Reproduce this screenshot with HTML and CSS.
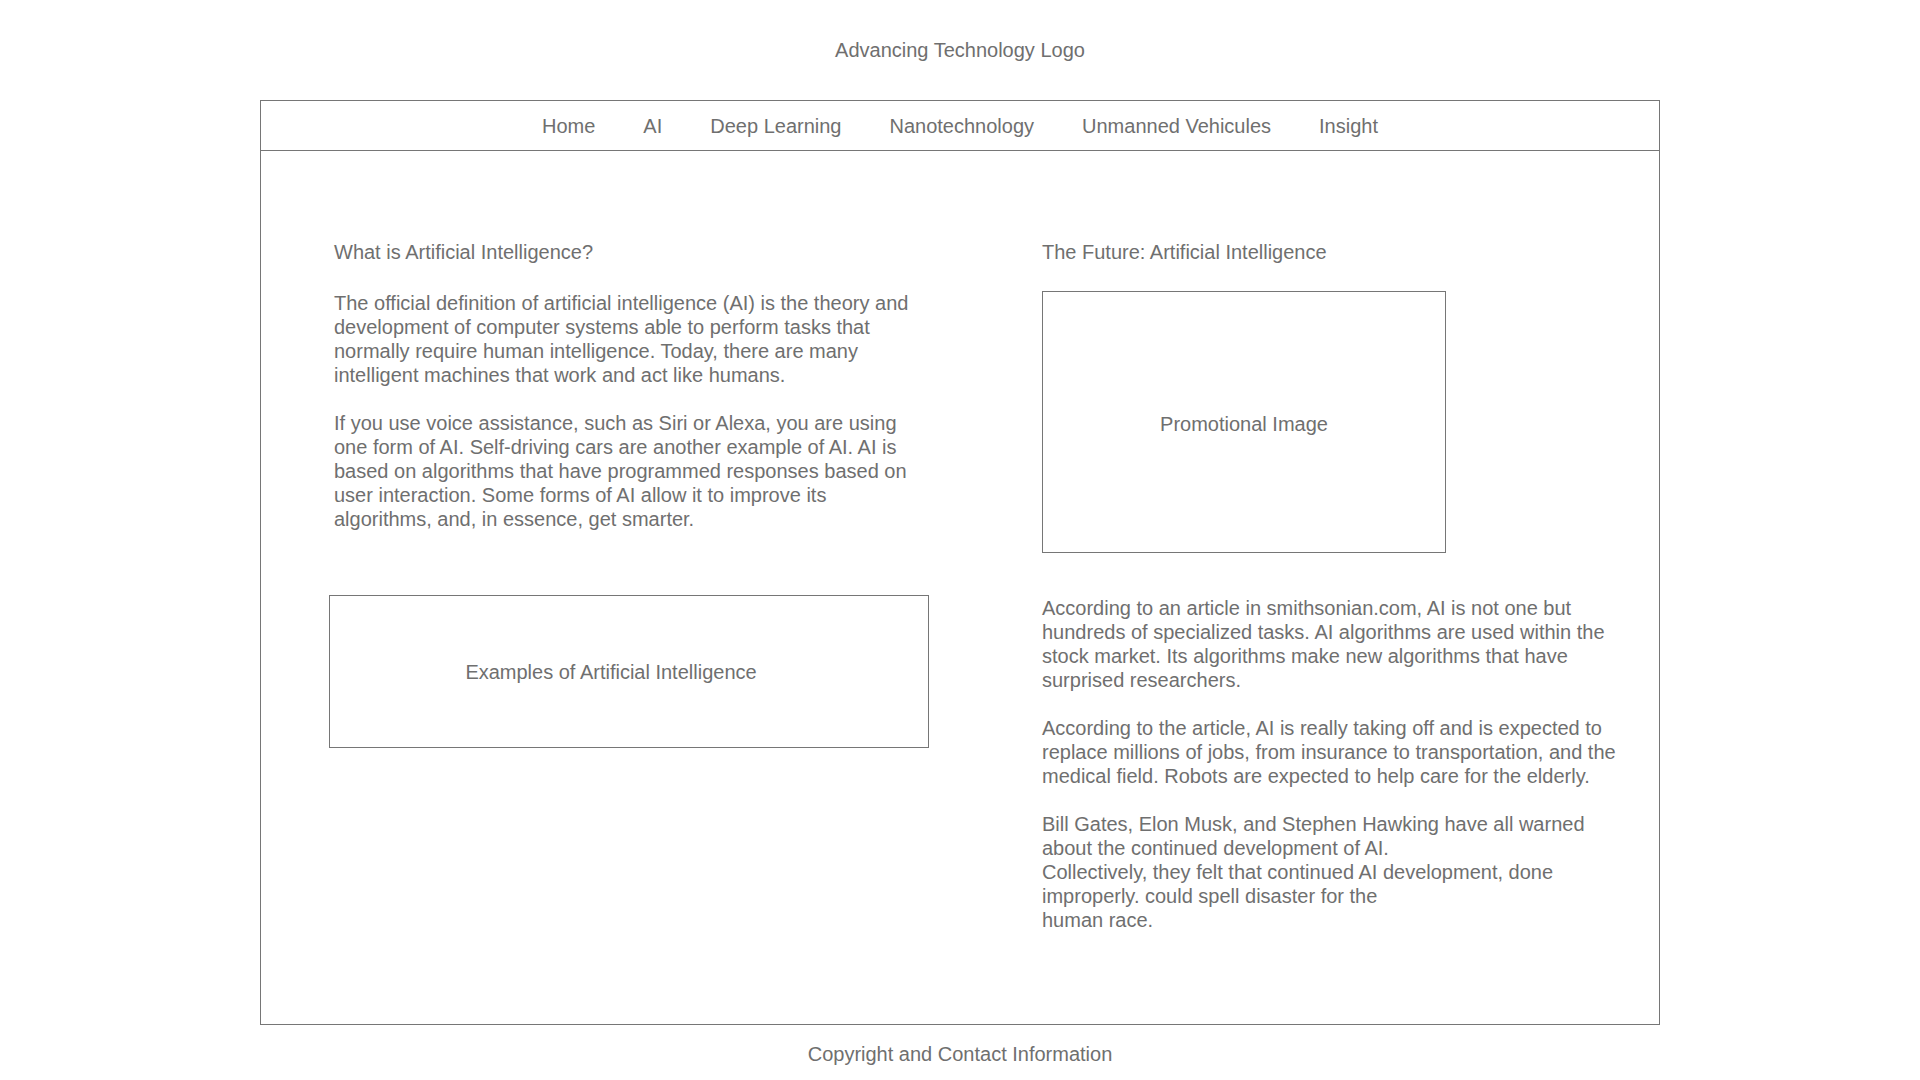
FILE: index.html
```html
<!DOCTYPE html>
<html lang="en">
<head>
  <meta charset="UTF-8" />
  <meta name="viewport" content="width=device-width, initial-scale=1.0" />
  <title>Advancing Technology | AI</title>
  <link rel="stylesheet" href="styles.css">
</head>
<body>
  <header class="logo">Advancing Technology Logo</header>

  <div class="frame">
    <nav class="menu">
      <a href="#">Home</a>
      <a href="#">AI</a>
      <a href="#">Deep Learning</a>
      <a href="#">Nanotechnology</a>
      <a href="#">Unmanned Vehicules</a>
      <a href="#">Insight</a>
    </nav>

    <main class="content">
      <section class="col">
        <h2>What is Artificial Intelligence?</h2>
        <p>The official definition of artificial intelligence (AI) is the theory and development of computer systems able to perform tasks that normally require human intelligence. Today, there are many intelligent machines that work and act like humans.</p>
        <p>If you use voice assistance, such as Siri or Alexa, you are using one form of AI. Self-driving cars are another example of AI. AI is based on algorithms that have programmed responses based on user interaction. Some forms of AI allow it to improve its algorithms, and, in essence, get smarter.</p>
        <div class="placeholder examples">Examples of Artificial Intelligence</div>
      </section>

      <section class="col">
        <h2>The Future: Artificial Intelligence</h2>
        <div class="placeholder promo">Promotional Image</div>
        <p class="first">According to an article in smithsonian.com, AI is not one but hundreds of specialized tasks. AI algorithms are used within the stock market. Its algorithms make new algorithms that have surprised researchers.</p>
        <p>According to the article, AI is really taking off and is expected to replace millions of jobs, from insurance to transportation, and the medical field. Robots are expected to help care for the elderly.</p>
        <p>Bill Gates, Elon Musk, and Stephen Hawking have all warned about the continued development of AI.<br>
        Collectively, they felt that continued AI development, done improperly. could spell disaster for the<br>
        human race.</p>
      </section>
    </main>
  </div>

  <footer>Copyright and Contact Information</footer>
</body>
</html>
```

FILE: styles.css
```css
body {
  font-family: "Liberation Sans", Arial, sans-serif;
  font-size: 20px;
  line-height: 24px;
  color: #6f6f6f;
  background: #fff;
  margin: 0;
  padding: 0;
}
.logo {
  height: 100px;
  display: flex;
  align-items: center;
  justify-content: center;
}
.frame {
  width: 1398px;
  margin: 0 auto;
  border: 1px solid #767676;
}
.menu {
  height: 49px;
  border-bottom: 1px solid #767676;
  display: flex;
  justify-content: center;
  align-items: center;
  gap: 48px;
}
.menu a {
  color: inherit;
  text-decoration: none;
}
.content {
  display: grid;
  grid-template-columns: 580px 580px;
  column-gap: 128px;
  padding: 89px 0 92px 73px;
}
.col h2 {
  font-size: 20px;
  font-weight: normal;
  margin: 0 0 27px;
}
.col p {
  margin: 0 0 24px;
  max-width: 584px;
}
.col p.first {
  margin-top: 43px;
}
.col p:last-child {
  margin-bottom: 0;
}
.placeholder {
  border: 1px solid #767676;
  display: flex;
  align-items: center;
  justify-content: center;
}
.examples {
  width: 562px;
  height: 151px;
  margin: 64px 0 0 -5px;
  padding-right: 36px;
}
.promo {
  width: 402px;
  height: 256px;
  padding-top: 4px;
}
footer {
  text-align: center;
  margin-top: 17px;
}
```
